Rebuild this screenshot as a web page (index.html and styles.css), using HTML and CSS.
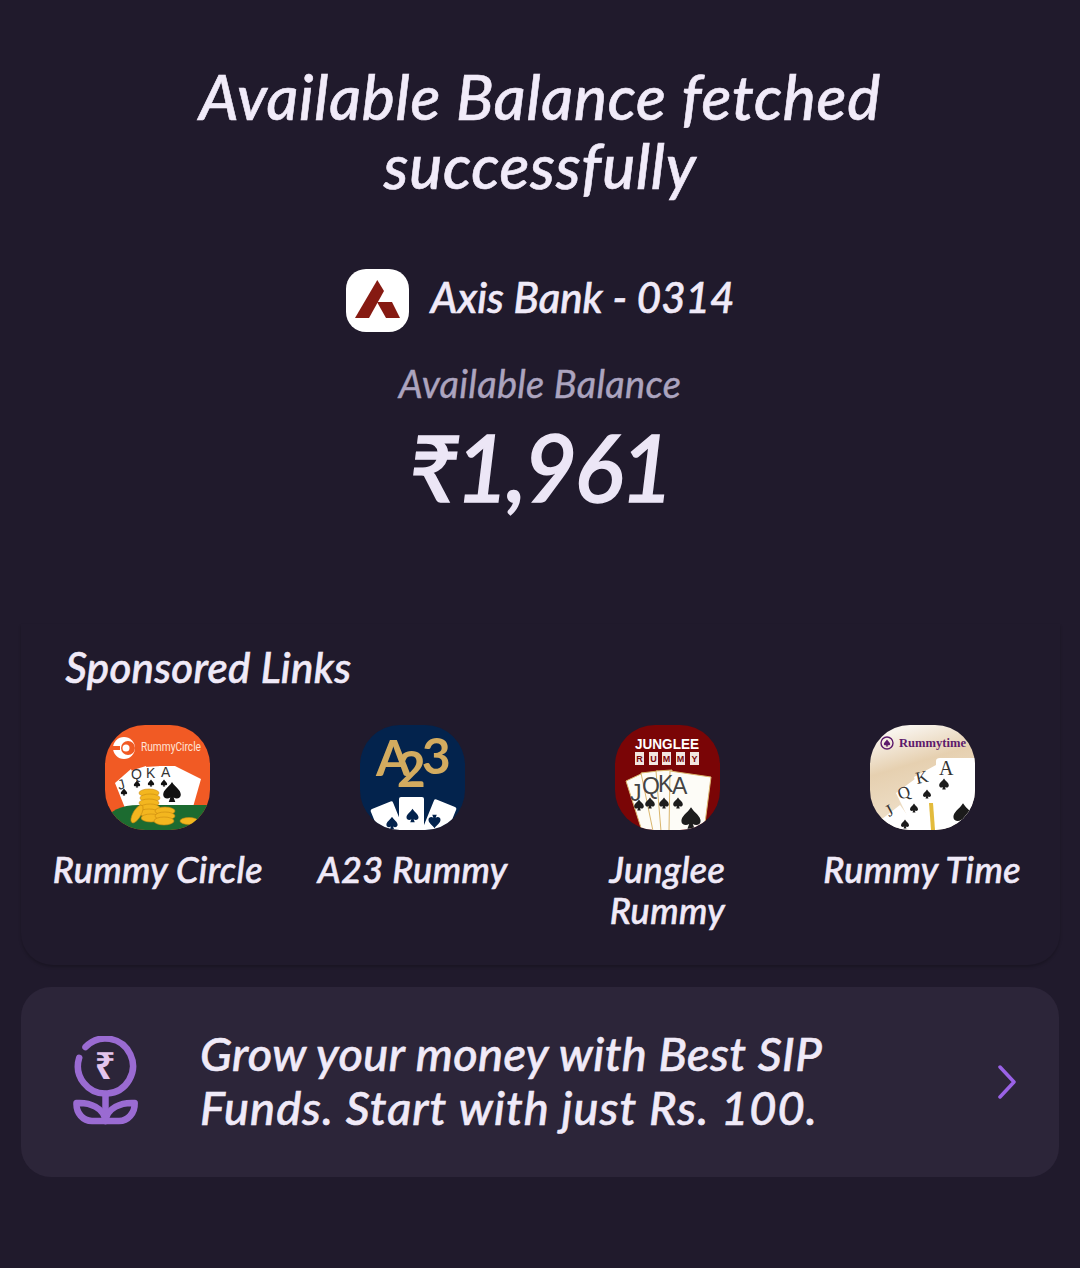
FILE: index.html
```html
<!DOCTYPE html>
<html lang="en">
<head>
<meta charset="utf-8">
<title>Available Balance</title>
<link rel="stylesheet" href="styles.css">
</head>
<body>
<svg class="defs" width="0" height="0" aria-hidden="true">
  <symbol id="spade" viewBox="0 0 20 20"><path d="M10 1C7 6 2 8 2 12.5c0 3 3.500 4.500 6.500 2.500L7 19h6l-1.500-4c3 2 6.500 .5 6.500-2.500C18 8 13 6 10 1z"/></symbol>
</svg>
<main class="screen">
  <h1 class="title">Available Balance fetched<br>successfully</h1>
  <div class="bank">
    <span class="bank-logo">
      <svg viewBox="0 0 63 63" width="63" height="63"><path fill="#861a12" d="M9 49 31.300 11 38 22 23 49z"/><path fill="#861a12" d="M31 33H46L54 49H40z"/></svg>
    </span>
    <span class="bank-name">Axis Bank - 0314</span>
  </div>
  <p class="balance-label">Available Balance</p>
  <p class="balance">₹1,961</p>

  <section class="sponsored">
    <h2 class="sponsored-title">Sponsored Links</h2>
    <div class="apps">
      <div class="app">
        <svg class="app-icon" viewBox="0 0 105 105">
          <rect width="105" height="105" fill="#f15a24"/>
          <circle cx="19" cy="23" r="11" fill="#fff"/><circle cx="23" cy="23" r="7" fill="#f15a24"/><circle cx="21" cy="23" r="3.500" fill="#fff"/><path d="M6 21h9v4H6z" fill="#f15a24"/>
          <text x="36" y="26" class="rc-text" textLength="60" lengthAdjust="spacingAndGlyphs">RummyCircle</text>
          <g fill="#fff"><path d="M10 58 26 44 40 82 22 88z"/><path d="M25 46 41 41 50 82H35z"/><path d="M40 42 56 41 60 82H46z"/><path d="M54 41 70 41 96 54 88 82H56z"/></g>
          <text x="14" y="65" class="card-l" transform="rotate(-15 14 65)">J</text><text x="26" y="54" class="card-l">Q</text><text x="41" y="53" class="card-l">K</text><text x="56" y="52" class="card-l">A</text>
          <g fill="#111"><use href="#spade" x="15" y="63" width="8" height="8"/><use href="#spade" x="28" y="55" width="8" height="8"/><use href="#spade" x="42" y="54" width="8" height="8"/><use href="#spade" x="55" y="54" width="8" height="8"/><use href="#spade" x="56" y="56" width="22" height="22"/></g>
          <path fill="#1c6b30" d="M0 97Q6 80 34 80H105V105H0z"/>
          <g fill="#f3b61f" stroke="#c98a10" stroke-width=".6"><ellipse cx="44" cy="68" rx="10" ry="4"/><ellipse cx="45" cy="73" rx="10" ry="4"/><ellipse cx="44" cy="78" rx="10" ry="4"/><ellipse cx="45" cy="83" rx="10" ry="4"/><ellipse cx="44" cy="88" rx="10" ry="4"/><ellipse cx="46" cy="93" rx="10" ry="4"/><ellipse cx="60" cy="86" rx="10" ry="4"/><ellipse cx="60" cy="91" rx="10" ry="4"/><ellipse cx="59" cy="96" rx="10" ry="4"/><ellipse cx="84" cy="96" rx="9" ry="3.500"/><ellipse cx="32" cy="89" rx="4" ry="10" transform="rotate(30 32 89)"/></g>
        </svg>
        <span class="app-name">Rummy Circle</span>
      </div>
      <div class="app">
        <svg class="app-icon" viewBox="0 0 105 105">
          <rect width="105" height="105" fill="#03234d"/>
          <text x="16" y="51" class="a23">A<tspan dx="-14" dy="11">2</tspan><tspan dx="-4" dy="-13">3</tspan></text>
          <g fill="#fff"><rect x="16" y="79" width="24" height="36" rx="2" transform="rotate(-22 28 97)"/><rect x="39" y="72" width="25" height="40" rx="2"/><rect x="67" y="77" width="24" height="36" rx="2" transform="rotate(22 79 95)"/></g>
          <g fill="#03234d"><use href="#spade" x="25" y="91" width="14" height="14"/><use href="#spade" x="45" y="83" width="15" height="15"/><use href="#spade" x="67" y="89" width="15" height="15" transform="rotate(180 74.500 96.500)"/></g>
        </svg>
        <span class="app-name">A23 Rummy</span>
      </div>
      <div class="app">
        <svg class="app-icon" viewBox="0 0 105 105">
          <rect width="105" height="105" fill="#7a0506"/>
          <text x="20" y="24" class="jg-title" textLength="64" lengthAdjust="spacingAndGlyphs">JUNGLEE</text>
          <g fill="#f2e6e0"><rect x="20" y="27" width="9" height="13"/><rect x="34" y="27" width="9" height="13"/><rect x="47" y="27" width="9" height="13"/><rect x="61" y="27" width="9" height="13"/><rect x="75" y="27" width="9" height="13"/></g>
          <text x="24.500 38.500 51.500 65.500 79.500" y="37" class="jg-sub">RUMMY</text>
          <g fill="#fdfcf7" stroke="#d9b56c" stroke-width="1"><path d="M11 56 28 48 44 106H27z"/><path d="M26 48 43 46 50 106H38z"/><path d="M41 46 57 45 58 106H46z"/><path d="M55 46 96 52 89 106H54z"/></g>
          <text x="15" y="76" class="jg-l">J</text><text x="27" y="69" class="jg-l">Q</text><text x="43" y="67" class="jg-l">K</text><text x="57" y="69" class="jg-l">A</text>
          <g fill="#1d1d1d"><use href="#spade" x="18" y="74" width="12" height="12"/><use href="#spade" x="29" y="72" width="12" height="12"/><use href="#spade" x="43" y="72" width="12" height="12"/><use href="#spade" x="57" y="72" width="12" height="12"/><use href="#spade" x="64" y="81" width="24" height="24"/></g>
        </svg>
        <span class="app-name">Junglee<br>Rummy</span>
      </div>
      <div class="app">
        <svg class="app-icon" viewBox="0 0 105 105">
          <defs><linearGradient id="rt" x1="0" y1="0" x2=".3" y2="1"><stop offset=".12" stop-color="#f8f3ec"/><stop offset=".45" stop-color="#e6d0b0"/><stop offset="1" stop-color="#f0e2cd"/></linearGradient></defs>
          <rect width="105" height="105" fill="url(#rt)"/>
          <circle cx="17" cy="18" r="6" fill="none" stroke="#5d1a6c" stroke-width="1.400"/><use href="#spade" x="13" y="14" width="8" height="8" fill="#5d1a6c"/>
          <text x="29" y="22" class="rt-text" textLength="67" lengthAdjust="spacingAndGlyphs">Rummytime</text>
          <g fill="#fff"><path d="M12 94 30 80 48 105H25z"/><path d="M26 68 45 54 66 105H44z"/><path d="M44 52 66 40V105H59z"/><path d="M66 36Q66 33 70 33H105V105H66z"/></g>
          <path fill="#e3bb3c" d="M59 78h4l2 27h-4z"/>
          <text x="19" y="92" class="rt-l" transform="rotate(-28 19 92)">J</text><text x="30" y="75" class="rt-l" transform="rotate(-20 30 75)">Q</text><text x="47" y="59" class="rt-l" transform="rotate(-12 47 59)">K</text><text x="69" y="50" class="rt-a">A</text>
          <g fill="#1b1b1b"><use href="#spade" x="30" y="94" width="10" height="10"/><use href="#spade" x="39" y="78" width="10" height="10"/><use href="#spade" x="52" y="64" width="10" height="10"/><use href="#spade" x="68" y="53" width="12" height="12"/><use href="#spade" x="81" y="77" width="24" height="24"/></g>
        </svg>
        <span class="app-name">Rummy Time</span>
      </div>
    </div>
  </section>

  <section class="promo">
    <svg class="promo-icon" viewBox="0 -2 66 92" width="66" height="92">
      <g fill="none" stroke="#9a6bd2" stroke-width="6.500" stroke-linecap="round" stroke-linejoin="round">
        <path d="M12.500 9.100A27.500 27.500 0 1 1 6.200 19.800"/>
        <path d="M32.500 56V83"/>
        <path d="M3.500 65C17 64 31 70 32.500 83H19C10 83 3 75 3.500 65Z"/>
        <path d="M61.700 65C48 64 34 70 32.500 83H46C55 83 62 75 61.700 65Z"/>
      </g>
      <text x="32" y="41" class="promo-rupee">₹</text>
    </svg>
    <p class="promo-text"><span class="promo-line">Grow your money with Best SIP</span><span class="promo-line promo-line-wide">Funds. Start with just Rs. 100.</span></p>
    <svg class="chevron" viewBox="0 0 20 34" width="20" height="34"><path d="M3 2 17 17 3 32" fill="none" stroke="#9a62e6" stroke-width="3.500" stroke-linecap="round" stroke-linejoin="round"/></svg>
  </section>
</main>
</body>
</html>
```

FILE: styles.css
```css
* { box-sizing: border-box; }
html, body { margin: 0; padding: 0; }
body { background: #201a2c; }
.defs { position: absolute; }
.screen {
  width: 1080px;
  height: 1268px;
  overflow: hidden;
  padding-top: 62px;
  font-family: "Lato", "Noto Sans", sans-serif;
  font-style: italic;
  color: #f0eaf8;
  display: flex;
  flex-direction: column;
  align-items: center;
  -webkit-text-stroke: .6px currentColor;
}
svg text { -webkit-text-stroke: 0; font-style: normal; }
.title {
  margin: 0;
  font-size: 62px;
  line-height: 69px;
  font-weight: 500;
  letter-spacing: .75px;
  text-align: center;
  color: #f1ebf9;
}
.bank {
  margin-top: 69px;
  display: flex;
  align-items: center;
  gap: 22px;
  height: 63px;
}
.bank-logo {
  width: 63px;
  height: 63px;
  border-radius: 20px;
  background: #fff;
  display: block;
  overflow: hidden;
}
.bank-logo svg { display: block; }
.bank-name { font-size: 42px; line-height: 57px; padding-bottom: 6px; font-weight: 500; }
.balance-label {
  margin: 27px 0 0;
  font-size: 38px;
  line-height: 48px;
  letter-spacing: .3px;
  color: #aca4bf;
  -webkit-text-stroke: .4px currentColor;
}
.balance {
  margin: 10px 0 0;
  font-size: 92px;
  line-height: 100px;
  font-weight: 500;
  color: #ece6f6;
  letter-spacing: -3px;
  -webkit-text-stroke: 1.500px currentColor;
}
.sponsored {
  margin-top: 107px;
  width: 1039px;
  height: 341px;
  border-radius: 0 0 32px 32px;
  box-shadow: 0 2px 3px rgba(0, 0, 0, .22);
  padding: 18px 10px 0;
}
.sponsored-title {
  margin: 0 0 0 35px;
  font-size: 42px;
  line-height: 50px;
  font-weight: 500;
  letter-spacing: .3px;
}
.apps {
  margin-top: 33px;
  display: grid;
  grid-template-columns: repeat(4, 1fr);
}
.app {
  display: flex;
  flex-direction: column;
  align-items: center;
  text-align: center;
}
.app-icon {
  width: 105px;
  height: 105px;
  border-radius: 40px;
  display: block;
}
.app-name {
  margin-top: 19px;
  font-size: 36px;
  line-height: 41px;
  font-weight: 500;
  letter-spacing: .4px;
}
.rc-text { font: 400 12px "Roboto", sans-serif; fill: #ffe3d6; }
.card-l { font: 400 14px "Liberation Sans", sans-serif; fill: #333; }
.a23 { font: 700 50px "Lato", sans-serif; fill: #d3ab5f; }
.jg-title { font: 700 15px "Liberation Sans", sans-serif; fill: #fff; }
.jg-sub { font: 700 9px "Liberation Sans", sans-serif; fill: #7a0506; text-anchor: middle; }
.jg-l { font: 400 23px "Liberation Sans", sans-serif; fill: #444; }
.rt-text { font: 700 13px "Liberation Serif", serif; fill: #5d1a6c; }
.rt-l { font: 400 17px "Liberation Serif", serif; fill: #333; }
.rt-a { font: 400 20px "Liberation Serif", serif; fill: #333; }
.promo {
  margin-top: 22px;
  width: 1038px;
  height: 190px;
  flex: none;
  border-radius: 30px;
  background: #2c2539;
  display: flex;
  align-items: center;
  padding: 0 42px 0 52px;
}
.promo-icon { flex: none; }
.promo-rupee { font: 700 36px "Noto Sans", sans-serif; fill: #e5c6ee; text-anchor: middle; }
.promo-text {
  flex: 1;
  margin: 0 0 0 61px;
  padding-bottom: 4px;
  font-size: 47px;
  line-height: 54px;
  font-weight: 500;
  letter-spacing: .4px;
}
.promo-line { display: block; }
.promo-line-wide { letter-spacing: 1px; }
.chevron { flex: none; }
```
